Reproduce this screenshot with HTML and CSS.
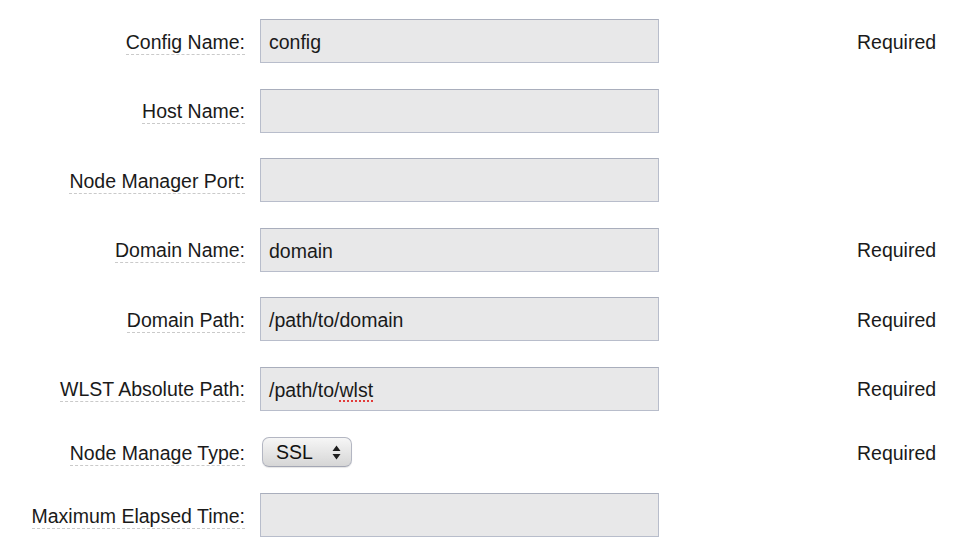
FILE: index.html
```html
<!DOCTYPE html>
<html>
<head>
<meta charset="utf-8">
<link rel="stylesheet" href="styles.css">
</head>
<body>
<form class="form">
  <div class="row">
    <div class="label"><span class="lbl">Config Name:</span></div>
    <div class="field">config</div>
    <div class="req">Required</div>
  </div>
  <div class="row">
    <div class="label"><span class="lbl">Host Name:</span></div>
    <div class="field"></div>
    <div class="req"></div>
  </div>
  <div class="row">
    <div class="label"><span class="lbl">Node Manager Port:</span></div>
    <div class="field"></div>
    <div class="req"></div>
  </div>
  <div class="row">
    <div class="label"><span class="lbl">Domain Name:</span></div>
    <div class="field">domain</div>
    <div class="req">Required</div>
  </div>
  <div class="row">
    <div class="label"><span class="lbl">Domain Path:</span></div>
    <div class="field">/path/to/domain</div>
    <div class="req">Required</div>
  </div>
  <div class="row">
    <div class="label"><span class="lbl">WLST Absolute Path:</span></div>
    <div class="field">/path/to/<span class="spell">wlst</span></div>
    <div class="req">Required</div>
  </div>
  <div class="row row-select">
    <div class="label"><span class="lbl">Node Manage Type:</span></div>
    <div class="selcell">
      <div class="select">
        <span>SSL</span>
        <svg class="arrows" width="9" height="15" viewBox="0 0 9 15"><path d="M4.5 0.5 L8.5 6 L0.5 6 Z M4.5 14.5 L8.5 9 L0.5 9 Z" fill="#1e1e1e"/></svg>
      </div>
    </div>
    <div class="req">Required</div>
  </div>
  <div class="row">
    <div class="label"><span class="lbl">Maximum Elapsed Time:</span></div>
    <div class="field"></div>
    <div class="req"></div>
  </div>
</form>
</body>
</html>
```
FILE: styles.css
```css
html, body {
  margin: 0;
  padding: 0;
  background: #fff;
}
body {
  font-family: "Liberation Sans", Arial, Helvetica, sans-serif;
  font-size: 19.5px;
  color: #1a1a1a;
}
.form {
  display: flex;
  flex-direction: column;
  gap: 25.6px;
  padding-top: 19px;
}
.row {
  display: grid;
  grid-template-columns: 245px 399px 1fr;
  column-gap: 15px;
  align-items: center;
  height: 44px;
}
.row-select {
  height: 31px;
}
.label {
  text-align: right;
  padding-top: 2px;
}
.lbl {
  border-bottom: 1px dashed #cacaca;
  padding-bottom: 1px;
}
.field {
  box-sizing: border-box;
  height: 44px;
  background: #e8e8e9;
  border: 1px solid #b8bdcb;
  border-top-color: #a9aebc;
  padding: 1px 0 0 8px;
  line-height: 42px;
}
.spell {
  text-decoration: underline dotted #e23b3b;
  text-decoration-thickness: 2px;
  text-underline-offset: 4px;
}
.selcell {
  display: flex;
  padding-left: 2px;
}
.select {
  position: relative;
  box-sizing: border-box;
  width: 90px;
  height: 30px;
  border: 1px solid #b3b6c2;
  border-bottom-color: #a4a7b4;
  border-radius: 7px;
  background: linear-gradient(#f6f6f6, #e6e6e6 50%, #d6d6d6);
  box-shadow: 0 1px 1px rgba(0,0,0,0.1);
  padding-left: 13px;
  line-height: 29px;
  font-size: 19.5px;
  color: #111;
}
.arrows {
  position: absolute;
  right: 10px;
  top: 7px;
}
.req {
  padding-left: 183px;
  padding-top: 2px;
  white-space: nowrap;
}
```
